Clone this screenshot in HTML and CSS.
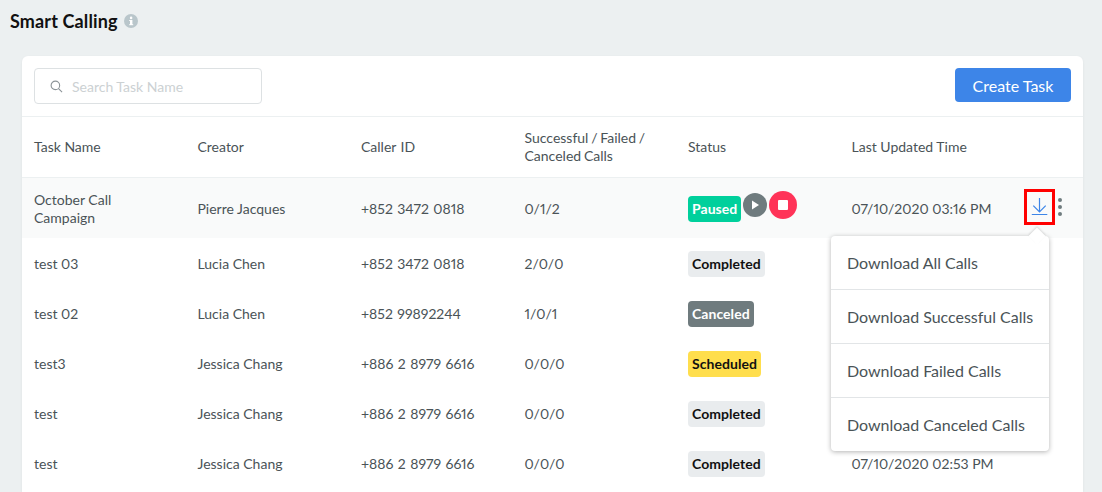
FILE: index.html
```html
<!DOCTYPE html>
<html lang="en">
  <head>
    <meta charset="UTF-8" />
    <title>Smart Calling</title>
    <link rel="stylesheet" href="styles.css">
  </head>
  <body>
    <div class="page-title">
      <h1>Smart Calling</h1>
      <svg class="info-icon" width="14" height="14" viewBox="0 0 14 14">
        <circle cx="7" cy="7" r="7" fill="#b9c6cb" />
        <rect x="6" y="6" width="2.4" height="5" fill="#fff" />
        <rect x="5.2" y="6" width="2" height="1" fill="#fff" />
        <rect x="5.2" y="10.2" width="4" height="1" fill="#fff" />
        <circle cx="7.1" cy="3.9" r="1.3" fill="#fff" />
      </svg>
    </div>

    <div class="card">
      <div class="toolbar">
        <div class="search">
          <svg width="13" height="13" viewBox="0 0 14 14" fill="none" stroke="#8b9397" stroke-width="1.2">
            <circle cx="5.8" cy="5.8" r="4.6" />
            <path d="M9.2 9.2l3.8 3.8" />
          </svg>
          <span>Search Task Name</span>
        </div>
        <button class="create-btn">Create Task</button>
      </div>

      <div class="row head">
        <div>Task Name</div>
        <div>Creator</div>
        <div class="caller">Caller ID</div>
        <div class="calls-head">Successful / Failed /<br>Canceled Calls</div>
        <div>Status</div>
        <div>Last Updated Time</div>
      </div>

      <div class="row active">
        <div>October Call<br>Campaign</div>
        <div>Pierre Jacques</div>
        <div class="caller">+852 3472 0818</div>
        <div>0/1/2</div>
        <div class="status-cell">
          <span class="badge paused">Paused</span>
          <span class="round-btn play">
            <svg width="10" height="10" viewBox="0 0 10 10"><path d="M2 0.5l7 4.5-7 4.5z" fill="#fff" /></svg>
          </span>
          <span class="round-btn stop"><i></i></span>
        </div>
        <div>07/10/2020 03:16 PM</div>
        <div class="actions">
          <span class="download">
            <svg width="18" height="18" viewBox="0 0 18 18" fill="none" stroke="#3d85e8" stroke-width="1.2">
              <path d="M8.500 0v14M2.300 7.600l6.200 6.400 6.200-6.400M0.800 16.500h15.500" />
            </svg>
          </span>
          <span class="dots"><i></i><i></i><i></i></span>
        </div>
      </div>

      <div class="row">
        <div>test 03</div>
        <div>Lucia Chen</div>
        <div class="caller">+852 3472 0818</div>
        <div>2/0/0</div>
        <div><span class="badge completed">Completed</span></div>
        <div></div>
      </div>
      <div class="row">
        <div>test 02</div>
        <div>Lucia Chen</div>
        <div class="caller">+852 99892244</div>
        <div>1/0/1</div>
        <div><span class="badge canceled">Canceled</span></div>
        <div></div>
      </div>
      <div class="row">
        <div>test3</div>
        <div>Jessica Chang</div>
        <div class="caller">+886 2 8979 6616</div>
        <div>0/0/0</div>
        <div><span class="badge scheduled">Scheduled</span></div>
        <div></div>
      </div>
      <div class="row">
        <div>test</div>
        <div>Jessica Chang</div>
        <div class="caller">+886 2 8979 6616</div>
        <div>0/0/0</div>
        <div><span class="badge completed">Completed</span></div>
        <div></div>
      </div>
      <div class="row">
        <div>test</div>
        <div>Jessica Chang</div>
        <div class="caller">+886 2 8979 6616</div>
        <div>0/0/0</div>
        <div><span class="badge completed">Completed</span></div>
        <div>07/10/2020 02:53 PM</div>
      </div>

      <ul class="menu">
        <li>Download All Calls</li>
        <li>Download Successful Calls</li>
        <li>Download Failed Calls</li>
        <li>Download Canceled Calls</li>
      </ul>
    </div>
  </body>
</html>
```

FILE: styles.css
```css
html,
body {
  height: 100%;
}
body {
  margin: 0;
  padding: 0 19px 0 22px;
  background: #ecf0f1;
  font-family: Lato, sans-serif;
  font-size: 14px;
  font-variant-numeric: proportional-nums;
  color: #4a5357;
  overflow: hidden;
  box-sizing: border-box;
}

/* Title */
.page-title {
  display: flex;
  align-items: center;
  gap: 6px;
  height: 42px;
  margin-left: -12px;
  margin-bottom: 14px;
}
.page-title h1 {
  margin: 0;
  font-size: 18px;
  font-weight: 700;
  color: #111;
  letter-spacing: 0.13px;
}

/* Card */
.card {
  position: relative;
  height: 436px;
  background: #fff;
  border-radius: 6px 6px 0 0;
  box-shadow: 0 1px 3px rgba(0, 0, 0, 0.06);
}
.toolbar {
  display: flex;
  justify-content: space-between;
  align-items: flex-start;
  height: 48px;
  padding: 12px 12px 0;
  border-bottom: 1px solid #ecf0f1;
}
.search {
  display: flex;
  align-items: center;
  gap: 9px;
  width: 228px;
  height: 36px;
  padding-left: 15px;
  border: 1px solid #dde1e3;
  border-radius: 4px;
  color: #ccd1d3;
  box-sizing: border-box;
}
.create-btn {
  width: 116px;
  height: 34px;
  border: 0;
  border-radius: 4px;
  background: #3d85e8;
  color: #fff;
  font-family: inherit;
  font-size: 16px;
}

/* Table rows */
.row {
  display: grid;
  grid-template-columns: repeat(5, 163.5px) 1fr;
  align-items: center;
  height: 50px;
  padding-left: 12px;
  line-height: 18px;
}
.row.head {
  height: 60px;
  border-bottom: 1px solid #ecf0f1;
}
.calls-head {
  word-spacing: -0.8px;
}
.caller {
  word-spacing: 0.8px;
}
.row.active {
  position: relative;
  height: 58px;
  padding-top: 2px;
  margin-bottom: 1px;
  background: #f9fafa;
}
.status-cell {
  display: flex;
  align-items: center;
}

/* Badges */
.badge {
  display: inline-block;
  padding: 0 4px;
  height: 26px;
  line-height: 26px;
  border-radius: 4px;
  font-weight: 700;
  letter-spacing: 0.05px;
  color: #111;
}
.badge.paused {
  background: #00d09c;
  color: #fff;
}
.badge.completed {
  background: #e9ecee;
}
.badge.canceled {
  background: #6f7b7e;
  color: #fff;
}
.badge.scheduled {
  background: #ffde4d;
}

.round-btn {
  display: flex;
  align-items: center;
  justify-content: center;
  margin-bottom: 8px;
  border-radius: 50%;
}
.round-btn.play {
  width: 24px;
  height: 24px;
  margin-left: 2px;
  margin-right: 2px;
  background: #6f7b7e;
}
.round-btn.stop {
  width: 28px;
  height: 28px;
  background: #ff3358;
}
.round-btn.stop i {
  width: 10px;
  height: 10px;
  border-radius: 1px;
  background: #fff;
}

/* Row actions */
.actions {
  position: absolute;
  right: 21px;
  top: 11px;
  display: flex;
  align-items: center;
  gap: 3px;
}
.download {
  display: flex;
  align-items: center;
  justify-content: center;
  width: 31px;
  height: 36px;
  border: 3px solid #f00;
  box-sizing: border-box;
}
.dots {
  display: flex;
  flex-direction: column;
  gap: 3px;
}
.dots i {
  width: 4px;
  height: 4px;
  border-radius: 50%;
  background: #6f7b7e;
}

/* Dropdown */
.menu {
  position: absolute;
  left: 809px;
  top: 180px;
  width: 218px;
  margin: 0;
  padding: 0;
  list-style: none;
  background: #fff;
  border-radius: 4px;
  box-shadow: 0 1px 5px rgba(0, 0, 0, 0.3);
  font-size: 16px;
  letter-spacing: -0.02px;
}
.menu::before {
  content: "";
  position: absolute;
  right: 6px;
  top: -6px;
  width: 12px;
  height: 12px;
  background: #fff;
  transform: rotate(45deg);
  box-shadow: -1px -1px 2px rgba(0, 0, 0, 0.12);
}
.menu li {
  position: relative;
  height: 54px;
  line-height: 54px;
  padding-left: 16px;
  border-bottom: 1px solid #e2e5e7;
  box-sizing: border-box;
}
.menu li:last-child {
  height: 53px;
  border-bottom: 0;
}
```
